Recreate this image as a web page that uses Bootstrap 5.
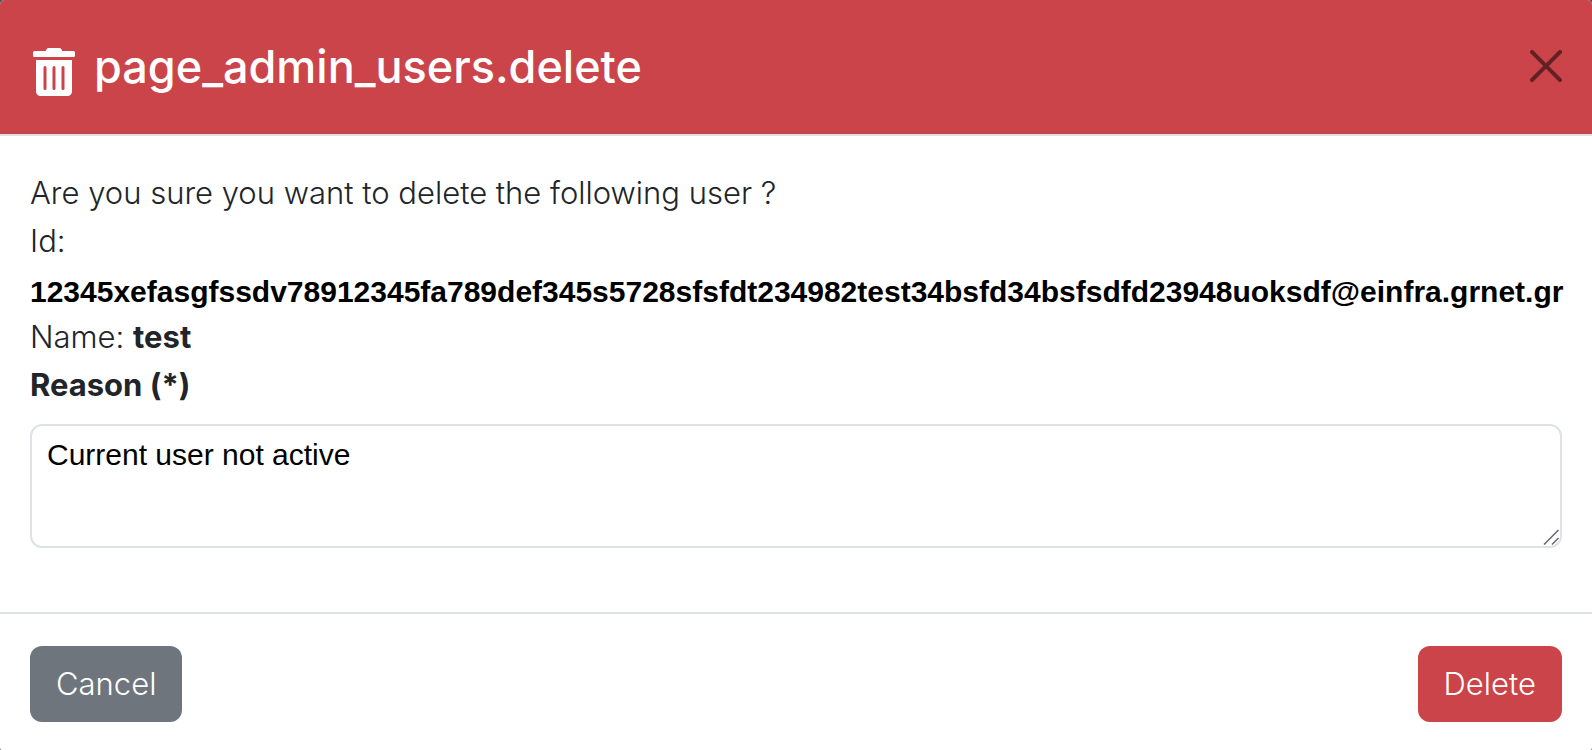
<!DOCTYPE html>
<html lang="en">
<head>
<meta charset="utf-8">
<meta name="viewport" content="width=device-width, initial-scale=1">
<title>Delete user</title>
<link href="https://cdn.jsdelivr.net/npm/bootstrap@5.3.0/dist/css/bootstrap.min.css" rel="stylesheet">
<style>
  body { background: #555; font-family: Inter, "Liberation Sans", sans-serif; font-size: 31px; font-weight: 300; line-height: 48px; color: #212529; }
  .dialog-box { background: #fff; border: 0; border-radius: 5px 5px 2px 2px; min-height: 100vh; overflow: hidden; }
  .modal-header { background: #cb444a; color: #fff; padding: 32px 30px; border-bottom: 2px solid #dee2e6; border-radius: 0; }
  .modal-title { font-size: 45px; line-height: 70px; font-weight: 500; gap: 19px; }
  .trash-icon { width: 42px; height: 48px; margin: 10px 0 0 3px; }
  .close-btn { border: 0; padding: 0 0 2px; background: none; color: #000; opacity: .5; line-height: 0; }
  .modal-body { padding: 33px 30px 32px; }
  .modal-body strong { font-weight: 700; }
  .user-id { font-family: "Liberation Sans", Arial, sans-serif; font-size: 30px; line-height: 43px; padding-top: 5px; color: #000; white-space: nowrap; }
  .reason-label { font-weight: 700; margin-bottom: 15px; }
  .reason-box { font-family: "Liberation Sans", Arial, sans-serif; font-size: 30px; line-height: 36px; color: #000; height: 124px; padding: 11px 15px; border: 2px solid #dee2e6; border-radius: 12px; resize: none; }
  .grip { position: absolute; right: 1px; bottom: 1px; pointer-events: none; }
  .modal-footer { padding: 32px 30px 28px; border-top: 2px solid #dee2e6; }
  .modal-footer > .btn { font-size: 31px; font-weight: 300; line-height: 48px; padding: 12px 24px; border: 2px solid transparent; border-radius: 12px; margin: 0; }
  .btn-cancel { background: #6e757c; color: #fff; }
  .btn-delete { background: #cb444a; color: #fff; }
</style>
</head>
<body>
<main class="modal-content dialog-box">
  <header class="modal-header d-flex align-items-center justify-content-between">
    <h1 class="modal-title d-flex align-items-center">
      <svg class="trash-icon" viewBox="0 0 448 512" fill="currentColor" aria-hidden="true"><path d="M32 464a48 48 0 0 0 48 48h288a48 48 0 0 0 48-48V128H32zm272-256a16 16 0 0 1 32 0v224a16 16 0 0 1-32 0zm-96 0a16 16 0 0 1 32 0v224a16 16 0 0 1-32 0zm-96 0a16 16 0 0 1 32 0v224a16 16 0 0 1-32 0zM432 32H312l-9.400-18.700A24 24 0 0 0 281.100 0H166.800a23.720 23.720 0 0 0-21.400 13.300L136 32H16A16 16 0 0 0 0 48v32a16 16 0 0 0 16 16h416a16 16 0 0 0 16-16V48a16 16 0 0 0-16-16z"/></svg>
      <span>page_admin_users.delete</span>
    </h1>
    <button type="button" class="close-btn" aria-label="Close">
      <svg width="32" height="32" viewBox="0 0 16 16" fill="currentColor" aria-hidden="true"><path d="M.293.293a1 1 0 0 1 1.414 0L8 6.586 14.293.293a1 1 0 1 1 1.414 1.414L9.414 8l6.293 6.293a1 1 0 0 1-1.414 1.414L8 9.414l-6.293 6.293a1 1 0 0 1-1.414-1.414L6.586 8 .293 1.707a1 1 0 0 1 0-1.414z"/></svg>
    </button>
  </header>
  <section class="modal-body flex-grow-1">
    <div>Are you sure you want to delete the following user ?</div>
    <div>Id:</div>
    <div><strong class="user-id d-block">12345xefasgfssdv78912345fa789def345s5728sfsfdt234982test34bsfd34bsfsdfd23948uoksdf@einfra.grnet.gr</strong></div>
    <div>Name: <strong>test</strong></div>
    <label class="reason-label d-block" for="reason">Reason (*)</label>
    <div class="position-relative">
      <textarea class="form-control reason-box" id="reason">Current user not active</textarea>
      <svg class="grip" width="18" height="18" viewBox="0 0 18 18" fill="none" stroke="#666" stroke-width="1.500" aria-hidden="true"><path d="M1 15.500 15.500 1M9 15.500 15.500 9"/></svg>
    </div>
  </section>
  <footer class="modal-footer d-flex justify-content-between">
    <button type="button" class="btn btn-cancel">Cancel</button>
    <button type="button" class="btn btn-delete">Delete</button>
  </footer>
</main>
<script src="https://cdn.jsdelivr.net/npm/bootstrap@5.3.0/dist/js/bootstrap.bundle.min.js"></script>
</body>
</html>
